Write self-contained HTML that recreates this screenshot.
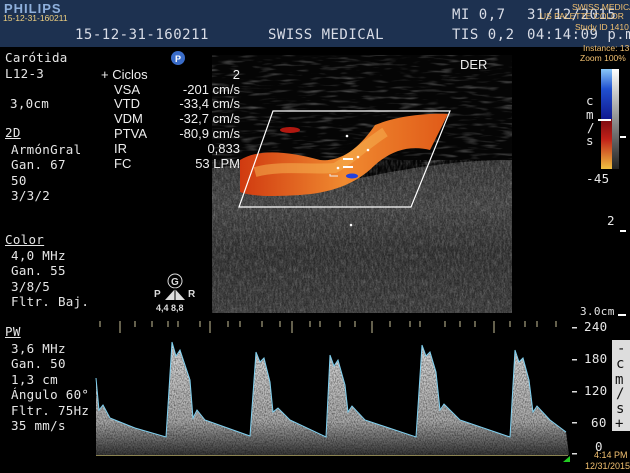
<!DOCTYPE html>
<html><head><meta charset="utf-8"><style>
*{margin:0;padding:0}
body{width:630px;height:473px;background:#000;position:relative;overflow:hidden;font-family:"DejaVu Sans Mono","Liberation Mono",monospace;color:#e6e6e6}
.t{position:absolute;font-size:12.5px;line-height:14px;white-space:nowrap;letter-spacing:0.3px}
.m{position:absolute;font-family:"Liberation Sans",sans-serif;font-size:13px;line-height:14px;white-space:nowrap;color:#eee}
.r{text-align:right;width:90px}
.o{position:absolute;font-family:"Liberation Sans",sans-serif;font-size:8.5px;color:#f2c070;white-space:nowrap;line-height:10px}
.h{position:absolute;font-size:14px;color:#d8dce6;white-space:nowrap;letter-spacing:0.5px}
u{text-decoration:underline}
</style></head><body>
<div style="position:absolute;left:0;top:0;width:630px;height:47px;background:#1d3150"></div>
<div class="h" style="left:4px;top:1px;font-family:'Liberation Sans',sans-serif;font-weight:bold;font-size:13px;color:#8fb0dc;letter-spacing:1px">PHILIPS</div>
<div class="o" style="left:3px;top:13px;color:#f0d080">15-12-31-160211</div>
<div class="h" style="left:75px;top:27px">15-12-31-160211</div>
<div class="h" style="left:268px;top:27px">SWISS MEDICAL</div>
<div class="h" style="left:452px;top:7px">MI 0,7</div>
<div class="h" style="left:452px;top:27px">TIS 0,2</div>
<div class="h" style="left:527px;top:7px">31/12/2015</div>
<div class="h" style="left:527px;top:27px">04:14:09 p.m</div>
<div class="o" style="left:572px;top:2px">SWISS MEDICAL</div>
<div class="o" style="left:540px;top:11px">US PALETTE COLOR</div>
<div class="o" style="left:575px;top:22px">Study ID 1410</div>
<div class="o" style="left:583px;top:43px">Instance: 13</div>
<div class="o" style="left:580px;top:53px">Zoom 100%</div>

<svg width="630" height="473" style="position:absolute;left:0;top:0">
<defs>
<filter id="n" x="0" y="0" width="100%" height="100%"><feTurbulence type="fractalNoise" baseFrequency="0.5 0.15" numOctaves="2" seed="3"/><feColorMatrix type="matrix" values="0 0 0 0 1  0 0 0 0 1  0 0 0 0 1  1.3 0 0 0 -0.45"/></filter>
<filter id="s" x="0" y="0" width="100%" height="100%"><feTurbulence type="fractalNoise" baseFrequency="0.05 0.3" numOctaves="2" seed="5"/><feColorMatrix type="matrix" values="0 0 0 0 1  0 0 0 0 1  0 0 0 0 1  2.2 0 0 0 -1.15"/></filter>
<filter id="n2" x="0" y="0" width="100%" height="100%"><feTurbulence type="fractalNoise" baseFrequency="0.9 0.6" numOctaves="1" seed="7"/><feColorMatrix type="matrix" values="0 0 0 0 0  0 0 0 0 0  0 0 0 0 0  1.6 0 0 0 -0.6"/></filter>
<linearGradient id="bm" x1="0" y1="0" x2="0" y2="1"><stop offset="0" stop-color="#3c3c3c"/><stop offset="0.3" stop-color="#4a4a4a"/><stop offset="0.6" stop-color="#363636"/><stop offset="1" stop-color="#404040"/></linearGradient>
<linearGradient id="cb" x1="0" y1="0" x2="0" y2="1"><stop offset="0" stop-color="#8ac8f8"/><stop offset="0.2" stop-color="#2050d0"/><stop offset="0.5" stop-color="#101890"/><stop offset="0.5" stop-color="#7a0a10"/><stop offset="0.7" stop-color="#c02018"/><stop offset="1" stop-color="#f0c040"/></linearGradient>
<linearGradient id="gb" x1="0" y1="0" x2="0" y2="1"><stop offset="0" stop-color="#fff"/><stop offset="1" stop-color="#222"/></linearGradient>
<linearGradient id="fl" x1="0" y1="0" x2="1" y2="0"><stop offset="0" stop-color="#d03a10"/><stop offset="0.5" stop-color="#f08a30"/><stop offset="1" stop-color="#e05a18"/></linearGradient>
<linearGradient id="wf" x1="0" y1="0" x2="0" y2="1"><stop offset="0" stop-color="#ddd"/><stop offset="0.7" stop-color="#aaa"/><stop offset="1" stop-color="#333"/></linearGradient>
<clipPath id="cw"><path d="M96 455 L96 378 L99 410 L103 405 L110 418 L135 428 L166 437 L172 342 L176 356 L180 350 L184 362 L190 380 L193 418 L197 410 L205 420 L250 436 L256 352 L260 362 L264 358 L270 382 L273 412 L278 408 L290 420 L326 437 L330 355 L334 366 L338 360 L345 385 L348 412 L352 406 L365 420 L416 437 L422 345 L426 356 L430 352 L436 372 L440 410 L444 404 L460 420 L510 437 L515 350 L519 362 L523 358 L529 380 L533 412 L537 406 L550 420 L566 432 L569 455 Z"/></clipPath>
</defs>
<rect x="212" y="55" width="300" height="258" fill="#050505"/>
<rect x="212" y="55" width="300" height="110" filter="url(#s)" opacity="0.35"/>
<path d="M212 168 C260 160 300 175 350 180 C400 170 450 160 512 160 L512 313 L212 313 Z" fill="url(#bm)"/>
<rect x="212" y="160" width="300" height="153" filter="url(#n)" opacity="0.3"/>
<rect x="212" y="160" width="300" height="153" filter="url(#n2)" opacity="0.6"/>
<path d="M240 160 C260 148 290 152 320 160 C340 162 358 150 375 125 C400 115 430 113 448 114 L430 150 C410 145 392 150 375 165 C355 185 330 193 300 195 C270 197 250 196 240 192 Z" fill="url(#fl)"/>
<path d="M255 172 C280 165 310 170 335 168 C350 160 365 145 385 132" stroke="#f5b050" stroke-width="10" fill="none" opacity="0.55"/>
<ellipse cx="290" cy="130" rx="10" ry="3" fill="#b01810"/>
<ellipse cx="352" cy="176" rx="6" ry="2.5" fill="#2040e0"/>
<path d="M273 111 L450 111 L411 207 L239 207 Z" fill="none" stroke="#fff" stroke-width="1.2"/>
<rect x="343" y="158" width="10" height="2" fill="#fff"/><rect x="343" y="166" width="10" height="2" fill="#fff"/>
<circle cx="347" cy="136" r="1.3" fill="#fff"/><circle cx="358" cy="157" r="1.3" fill="#fff"/><circle cx="368" cy="150" r="1.3" fill="#fff"/><circle cx="338" cy="168" r="1.3" fill="#fff"/><circle cx="351" cy="225" r="1.3" fill="#fff"/>
<path d="M330 174 L330 176 L338 176" stroke="#eee" fill="none"/>
<rect x="601" y="69" width="11" height="100" fill="url(#cb)"/>
<rect x="612" y="69" width="7" height="100" fill="url(#gb)"/>
<rect x="598" y="119" width="13" height="2" fill="#fff"/>
<rect x="620" y="136" width="6" height="2" fill="#fff"/>
<rect x="620" y="230" width="6" height="2" fill="#fff"/>
<rect x="618" y="314" width="8" height="2" fill="#fff"/>
<circle cx="178" cy="58" r="7" fill="#3a6cc8"/><text x="175" y="62" font-size="9" fill="#fff" font-family="Liberation Sans" font-weight="bold">P</text>
<circle cx="175" cy="281" r="7" fill="none" stroke="#ddd"/><text x="171" y="285" font-size="10" fill="#ddd" font-family="Liberation Sans" font-weight="bold">G</text>
<path d="M175 289 L185 300 L165 300 Z" fill="#ddd"/><line x1="175" y1="288" x2="175" y2="300" stroke="#000"/>
<text x="154" y="297" font-size="10" fill="#ddd" font-family="Liberation Sans" font-weight="bold">P</text>
<text x="188" y="297" font-size="10" fill="#ddd" font-family="Liberation Sans" font-weight="bold">R</text>
<text x="156" y="311" font-size="9" fill="#ddd" font-family="Liberation Sans" font-weight="bold">4,4  8,8</text>
<g stroke="#c8c098" stroke-width="1">
<path d="M100 321v6M120 321v12M135 321v6M152 321v6M168 321v6M178 321v6M200 321v6M210 321v12M228 321v6M240 321v6M262 321v6M280 321v6M292 321v12M310 321v6M320 321v6M340 321v6M355 321v6M372 321v12M390 321v6M410 321v6M420 321v6M445 321v6M460 321v6M475 321v6M494 321v12M510 321v6M525 321v6M537 321v6M556 321v6"/>
</g>
<line x1="96" y1="455.5" x2="568" y2="455.5" stroke="#8a8250"/>
<rect x="96" y="340" width="474" height="116" fill="url(#wf)" clip-path="url(#cw)"/>
<rect x="96" y="340" width="474" height="116" filter="url(#n2)" opacity="0.7" clip-path="url(#cw)"/>
<path d="M96 378 L99 410 L103 405 L110 418 L135 428 L166 437 L172 342 L176 356 L180 350 L184 362 L190 380 L193 418 L197 410 L205 420 L250 436 L256 352 L260 362 L264 358 L270 382 L273 412 L278 408 L290 420 L326 437 L330 355 L334 366 L338 360 L345 385 L348 412 L352 406 L365 420 L416 437 L422 345 L426 356 L430 352 L436 372 L440 410 L444 404 L460 420 L510 437 L515 350 L519 362 L523 358 L529 380 L533 412 L537 406 L550 420 L566 432" fill="none" stroke="#7fd0f0" stroke-width="1"/>
<path d="M563 462 L570 456 L570 462 Z" fill="#2c2"/>
<g fill="#ddd"><rect x="572" y="327" width="5" height="1.5"/><rect x="572" y="359" width="5" height="1.5"/><rect x="572" y="391" width="5" height="1.5"/><rect x="572" y="422" width="5" height="1.5"/><rect x="572" y="453" width="5" height="1.5"/></g>
<rect x="612" y="340" width="18" height="91" fill="#ddd"/>
<g font-family="DejaVu Sans Mono" font-size="14" fill="#111"><text x="617" y="353">-</text><text x="616" y="368">c</text><text x="615" y="384">m</text><text x="616" y="398">/</text><text x="616" y="413">s</text><text x="615" y="428">+</text></g>
</svg>

<div class="t" style="left:5px;top:51px">Carótida</div>
<div class="t" style="left:5px;top:67px">L12-3</div>
<div class="t" style="left:10px;top:97px">3,0cm</div>
<div class="t" style="left:5px;top:126px"><u>2D</u></div>
<div class="t" style="left:11px;top:143px">ArmónGral</div>
<div class="t" style="left:11px;top:158px">Gan. 67</div>
<div class="t" style="left:11px;top:174px">50</div>
<div class="t" style="left:11px;top:189px">3/3/2</div>
<div class="t" style="left:5px;top:233px"><u>Color</u></div>
<div class="t" style="left:11px;top:249px">4,0 MHz</div>
<div class="t" style="left:11px;top:264px">Gan. 55</div>
<div class="t" style="left:11px;top:280px">3/8/5</div>
<div class="t" style="left:11px;top:295px">Fltr. Baj.</div>
<div class="t" style="left:5px;top:325px"><u>PW</u></div>
<div class="t" style="left:11px;top:342px">3,6 MHz</div>
<div class="t" style="left:11px;top:357px">Gan. 50</div>
<div class="t" style="left:11px;top:373px">1,3 cm</div>
<div class="t" style="left:11px;top:388px">Ángulo 60°</div>
<div class="t" style="left:11px;top:404px">Fltr. 75Hz</div>
<div class="t" style="left:11px;top:419px">35 mm/s</div>

<div class="m" style="left:101px;top:68px">+ Ciclos</div>
<div class="m" style="left:114px;top:83px">VSA</div>
<div class="m" style="left:114px;top:97px">VTD</div>
<div class="m" style="left:114px;top:112px">VDM</div>
<div class="m" style="left:114px;top:127px">PTVA</div>
<div class="m" style="left:114px;top:142px">IR</div>
<div class="m" style="left:114px;top:157px">FC</div>
<div class="m r" style="left:150px;top:68px">2</div>
<div class="m r" style="left:150px;top:83px">-201 cm/s</div>
<div class="m r" style="left:150px;top:97px">-33,4 cm/s</div>
<div class="m r" style="left:150px;top:112px">-32,7 cm/s</div>
<div class="m r" style="left:150px;top:127px">-80,9 cm/s</div>
<div class="m r" style="left:150px;top:142px">0,833</div>
<div class="m r" style="left:150px;top:157px">53 LPM</div>
<div class="m" style="left:460px;top:58px">DER</div>

<div class="t" style="left:586px;top:94px">c</div>
<div class="t" style="left:586px;top:108px">m</div>
<div class="t" style="left:587px;top:121px">/</div>
<div class="t" style="left:586px;top:134px">s</div>
<div class="t" style="left:586px;top:172px">-45</div>
<div class="t" style="left:607px;top:214px">2</div>
<div class="t" style="left:580px;top:305px;font-size:11px">3.0cm</div>
<div class="t" style="left:584px;top:320px">240</div>
<div class="t" style="left:584px;top:352px">180</div>
<div class="t" style="left:584px;top:384px">120</div>
<div class="t" style="left:591px;top:416px">60</div>
<div class="t" style="left:595px;top:440px">0</div>
<div class="o" style="left:594px;top:450px;font-size:9px">4:14 PM</div>
<div class="o" style="left:585px;top:461px;font-size:9px">12/31/2015</div>
</body></html>
